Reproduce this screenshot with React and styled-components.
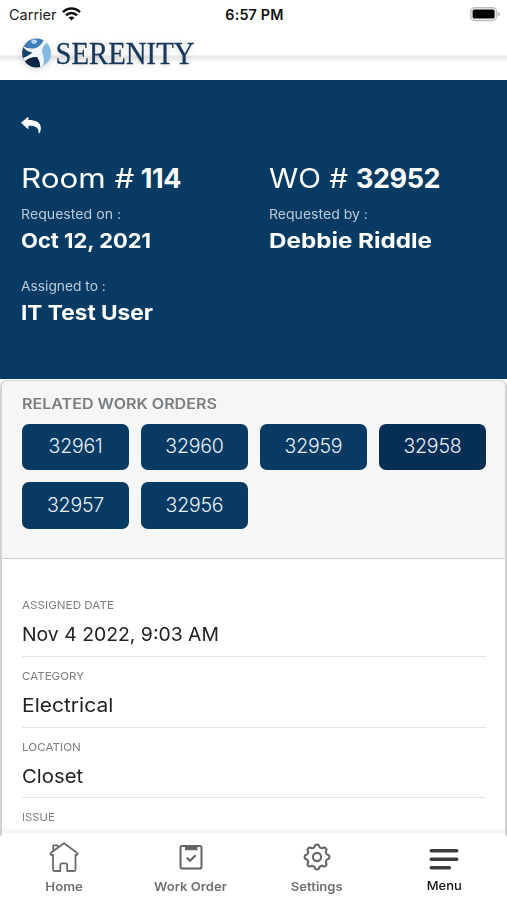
import React, { useState } from "react";
import styled, { createGlobalStyle } from "styled-components";

const GlobalStyle = createGlobalStyle`
  * {
    box-sizing: border-box;
  }
  body {
    margin: 0;
    background: #ffffff;
    font-family: Inter, "Open Sans", sans-serif;
  }
`;

const Screen = styled("div")`
  position: relative;
  width: 507px;
  height: 900px;
  overflow: hidden;
  display: flex;
  flex-direction: column;
  background: #ffffff;
`;

// widens the letters, $gap makes up for the width the transform does not reserve
const Wide = styled("span")`
  display: inline-block;
  white-space: nowrap;
  transform: scaleX(${props => props.$by || 1});
  transform-origin: ${props => (props.$center ? "center" : "left")};
  margin-right: ${props => props.$gap || 0}px;
`;

const StatusBar = styled("div")`
  display: grid;
  grid-template-columns: 1fr auto 1fr;
  align-items: center;
  height: 28px;
  padding: 0 7px 0 9px;
  font-size: 14.5px;
  color: #1c1c1c;
`;

const Carrier = styled("div")`
  display: flex;
  align-items: center;
  gap: 5px;
`;

const Clock = styled("div")`
  font-weight: 600;
  font-size: 14.3px;
  letter-spacing: 0.2px;
  color: #111111;
`;

const Battery = styled("svg")`
  justify-self: end;
`;

const Header = styled("div")`
  height: 52px;
  padding: 7px 0 0 18px;
  background: linear-gradient(#ffffff 27px, #e8e8e8 28px, #eeeeee 31px, #fbfbfb 33px, #ffffff 36px);
`;

const Logo = styled("svg")`
  display: block;
  filter: drop-shadow(0 2px 3px rgba(0, 0, 0, 0.15));
`;

const Hero = styled("div")`
  height: 299px;
  padding: 36px 21px 0;
  background: #073b63;
  color: #ffffff;
`;

const BackButton = styled("button")`
  display: block;
  width: 20px;
  height: 20px;
  padding: 0;
  border: 0;
  background: none;
  color: #ffffff;
`;

const HeroGrid = styled("div")`
  display: grid;
  grid-template-columns: 248px 1fr;
  margin-top: 26px;
`;

const Title = styled("div")`
  font-size: 27px;
  line-height: 34px;
  white-space: nowrap;
  margin-bottom: 9px;

  b {
    font-weight: 700;
    letter-spacing: -0.4px;
  }
`;

const HeroLabel = styled("div")`
  font-size: 13px;
  line-height: 18px;
  color: #bccbd7;
`;

const HeroValue = styled("div")`
  margin-top: 4px;
  font-size: 20.5px;
  line-height: 28px;
  font-weight: 700;
  margin-bottom: 22px;
`;

const Card = styled("div")`
  flex: 1;
  margin-top: 1px;
  border: 1px solid #d2d2d2;
  border-width: 1px 2px 0;
  border-radius: 7px 7px 0 0;
  overflow: hidden;
`;

const Related = styled("div")`
  height: 178px;
  padding: 14px 19px 0 20px;
  background: #f6f6f6;
  border-bottom: 1px solid #cfcfcf;
`;

const RelatedTitle = styled("div")`
  font-size: 14px;
  line-height: 18px;
  font-weight: 600;
  color: #7a7e81;
`;

const OrderGrid = styled("div")`
  display: grid;
  grid-template-columns: repeat(4, 107px);
  gap: 12px;
  margin-top: 10.5px;
`;

const OrderButton = styled("button")`
  height: 46.5px;
  padding: 0 0 1px;
  border: 0;
  border-radius: 7px;
  font-family: inherit;
  font-size: 19.5px;
  font-weight: 300;
  letter-spacing: -0.2px;
  color: #e8f0f6;
  background: ${props => (props.$active ? "#072f55" : "#073b63")};
`;

const Fields = styled("div")`
  padding: 27px 19px 0 20px;
`;

const Field = styled("div")`
  height: 70.8px;
  padding-top: 11px;
  border-bottom: 1px solid #e4e4e4;
`;

const FieldLabel = styled("div")`
  font-size: 11px;
  line-height: 16px;
  color: #7f7f7f;
`;

const FieldValue = styled("div")`
  margin-top: 8px;
  font-size: 19.2px;
  line-height: 26px;
  color: #222222;
`;

const NavBar = styled("div")`
  position: absolute;
  left: 0;
  right: 0;
  bottom: 0;
  height: 67px;
  display: grid;
  grid-template-columns: repeat(4, 1fr);
  padding: 0 0 0 1px;
  background: #ffffff;
  border-radius: 5px 5px 0 0;
  box-shadow: 0 -1px 6px rgba(0, 0, 0, 0.1);
`;

const NavItem = styled("div")`
  display: flex;
  flex-direction: column;
  align-items: center;
  padding-top: 8px;
  font-size: 12px;
  line-height: 16px;
  font-weight: ${props => (props.$active ? 500 : 600)};
  color: ${props => (props.$active ? "#111111" : "#707070")};

  svg {
    margin-bottom: ${props => (props.$active ? 4 : 5)}px;
  }
`;

const orders = ["32961", "32960", "32959", "32958", "32957", "32956"];

const fields = [
  { label: "ASSIGNED DATE", value: "Nov 4 2022, 9:03 AM", labelWide: 1.06, wide: 1.01 },
  { label: "CATEGORY", value: "Electrical", labelWide: 1.05, wide: 1.095 },
  { label: "LOCATION", value: "Closet", labelWide: 1.06, wide: 1.06 },
  { label: "ISSUE", value: "", labelWide: 1.03, wide: 1 },
];

const WifiIcon = () => (
  <svg width="19" height="14" viewBox="0 0 19 14" fill="none" stroke="#111" strokeWidth="2.5">
    <path d="M1 5.2C5.8 .4 13.2 .4 18 5.2" />
    <path d="M4 8.3c3.1-3.1 7.9-3.1 11 0" />
    <path d="M9.5 13.6 6.5 10.6c1.7-1.6 4.3-1.6 6 0z" fill="#111" stroke="none" />
  </svg>
);

const SerenityLogo = () => (
  <Logo width="190" height="44" viewBox="0 0 190 44">
    <defs>
      <clipPath id="globe">
        <circle cx="18.5" cy="18" r="14.4" />
      </clipPath>
    </defs>
    <g clipPath="url(#globe)">
      <path d="M0 12V0H30L18 17Z" fill="#3d7db9" />
      <path d="M30 2 18 17 25 36H40V2Z" fill="#83b8e2" />
      <path d="M0 25 18 19 26 36H0Z" fill="#0c2545" />
      <path d="M0 8 18 17 0 27Z" fill="#17436e" />
      <path d="M13 6C15.5 3.6 19 4.4 19.2 6.8C17.5 9.6 14 9.8 13 6Z" fill="#b5d4ee" />
      <path
        d="M4 10.5Q10 14.5 17 13.2Q22.5 12 26 4.5L29.5 7.5Q23.3 12 24 17Q27.5 24 24.5 33L22 33Q22.5 26 19 22Q12 21.5 6 27L3.5 24Q11 20.5 14.5 17.5Q7.5 16.5 4 10.5Z"
        fill="#f1f6fa"
      />
    </g>
    <text
      x="37.5"
      y="29.3"
      fill="#18375a"
      stroke="#18375a"
      strokeWidth="0.3"
      fontFamily="'Liberation Serif', serif"
      fontSize="31"
      textLength="139"
      lengthAdjust="spacingAndGlyphs"
    >
      SERENITY
    </text>
  </Logo>
);

const ReplyIcon = () => (
  <svg width="20" height="20" viewBox="0 0 20 20" fill="currentColor">
    <path d="M0 6.8 6.6 1.2C7 .9 7.4 1.1 7.4 1.6V4C14.5 4 19.8 6 19.8 12.2C19.8 14.2 19.3 16 18.3 17.2C18 17.6 17.6 17.4 17.6 17C17.8 11.3 14.5 9.7 7.4 9.7V12.4C7.4 12.9 7 13.1 6.6 12.8Z" />
  </svg>
);

const HomeIcon = () => (
  <svg width="30" height="33" viewBox="0 0 30 33" fill="none" stroke="#6b6b6b" strokeWidth="1.8" strokeLinejoin="round" strokeLinecap="round">
    <path d="M4 14V28.5Q4 30 5.5 30H11.3V24.3Q11.3 22.3 13.3 22.3H16.2Q18.2 22.3 18.2 24.3V30H25Q26.5 30 26.5 28.5V14L28.2 13.8Q28.9 12.6 28 11.8L15 2.2 2 11.8Q1.1 12.6 2 13.8Z" />
    <path d="M4.3 9.8V4.4H8.8V6.4" />
  </svg>
);

const ClipboardIcon = () => (
  <svg width="30" height="33" viewBox="0 0 30 33" fill="none" stroke="#646464" strokeWidth="2">
    <rect x="4.5" y="5" width="21" height="22.5" rx="1.8" />
    <path d="M9 4.2H21.5V9.2H9Z" fill="#646464" stroke="none" />
    <path d="M10.8 16.8 14 19.8 19.6 14.2" strokeWidth="2.2" />
  </svg>
);

const gearPath = () => {
  const points = [];
  for (let i = 0; i <= 96; i++) {
    const a = (i / 96) * Math.PI * 2;
    const wave = Math.cos(a * 8);
    const r = 11.1 + 1.3 * Math.tanh(wave * 1.8);
    points.push(`${(15 + r * Math.cos(a)).toFixed(2)} ${(16 + r * Math.sin(a)).toFixed(2)}`);
  }
  return `M${points.join("L")}Z`;
};

const GearIcon = () => (
  <svg width="30" height="33" viewBox="0 0 30 33" fill="none" stroke="#666" strokeWidth="2.1" strokeLinejoin="round">
    <path d={gearPath()} />
    <circle cx="15" cy="16" r="4.1" />
  </svg>
);

const MenuIcon = () => (
  <svg width="30" height="33" viewBox="0 0 30 33" fill="none" stroke="#3c3c3c" strokeWidth="3.6" strokeLinecap="round">
    <path d="M2.3 9.7H27.7M2.3 18.2H27.7M2.3 26.7H20.3" />
  </svg>
);

export default function App() {
  const [selected, setSelected] = useState("32958");

  return (
    <Screen>
      <GlobalStyle />
      <StatusBar>
        <Carrier>
          Carrier
          <WifiIcon />
        </Carrier>
        <Clock>6:57 PM</Clock>
        <Battery width="30" height="16" viewBox="0 0 30 16">
          <rect x=".8" y="1.8" width="25.6" height="12.6" rx="4" fill="#fff" stroke="#bdbdbd" strokeWidth="1.5" />
          <rect x="2.6" y="3.6" width="22" height="9" rx="1.6" fill="#000" />
          <path d="M27.8 5.8Q30 6.8 30 8T27.8 10.4Z" fill="#b3b3b3" />
        </Battery>
      </StatusBar>
      <Header>
        <SerenityLogo />
      </Header>
      <Hero>
        <BackButton aria-label="Back">
          <ReplyIcon />
        </BackButton>
        <HeroGrid>
          <div>
            <Title><Wide $by={1.16} $gap={22}>Room #</Wide><b>114</b></Title>
            <HeroLabel><Wide $by={1.087}>Requested on :</Wide></HeroLabel>
            <HeroValue><Wide $by={1.07}>Oct 12, 2021</Wide></HeroValue>
            <HeroLabel><Wide $by={1.06}>Assigned to :</Wide></HeroLabel>
            <HeroValue><Wide $by={1.105}>IT Test User</Wide></HeroValue>
          </div>
          <div>
            <Title><Wide $by={1.1} $gap={15}>WO #</Wide><b>32952</b></Title>
            <HeroLabel><Wide $by={1.08}>Requested by :</Wide></HeroLabel>
            <HeroValue><Wide $by={1.18}>Debbie Riddle</Wide></HeroValue>
          </div>
        </HeroGrid>
      </Hero>
      <Card>
        <Related>
          <RelatedTitle><Wide $by={1.147}>RELATED WORK ORDERS</Wide></RelatedTitle>
          <OrderGrid>
            {orders.map(order => (
              <OrderButton key={order} $active={order === selected} onClick={() => setSelected(order)}>
                {order}
              </OrderButton>
            ))}
          </OrderGrid>
        </Related>
        <Fields>
          {fields.map(field => (
            <Field key={field.label}>
              <FieldLabel><Wide $by={field.labelWide}>{field.label}</Wide></FieldLabel>
              <FieldValue><Wide $by={field.wide}>{field.value}</Wide></FieldValue>
            </Field>
          ))}
        </Fields>
      </Card>
      <NavBar>
        <NavItem><HomeIcon /><Wide $center $by={1.1}>Home</Wide></NavItem>
        <NavItem><ClipboardIcon /><Wide $center $by={1.09}>Work Order</Wide></NavItem>
        <NavItem><GearIcon /><Wide $center $by={1.09}>Settings</Wide></NavItem>
        <NavItem $active><MenuIcon /><Wide $center $by={1.08}>Menu</Wide></NavItem>
      </NavBar>
    </Screen>
  );
}
